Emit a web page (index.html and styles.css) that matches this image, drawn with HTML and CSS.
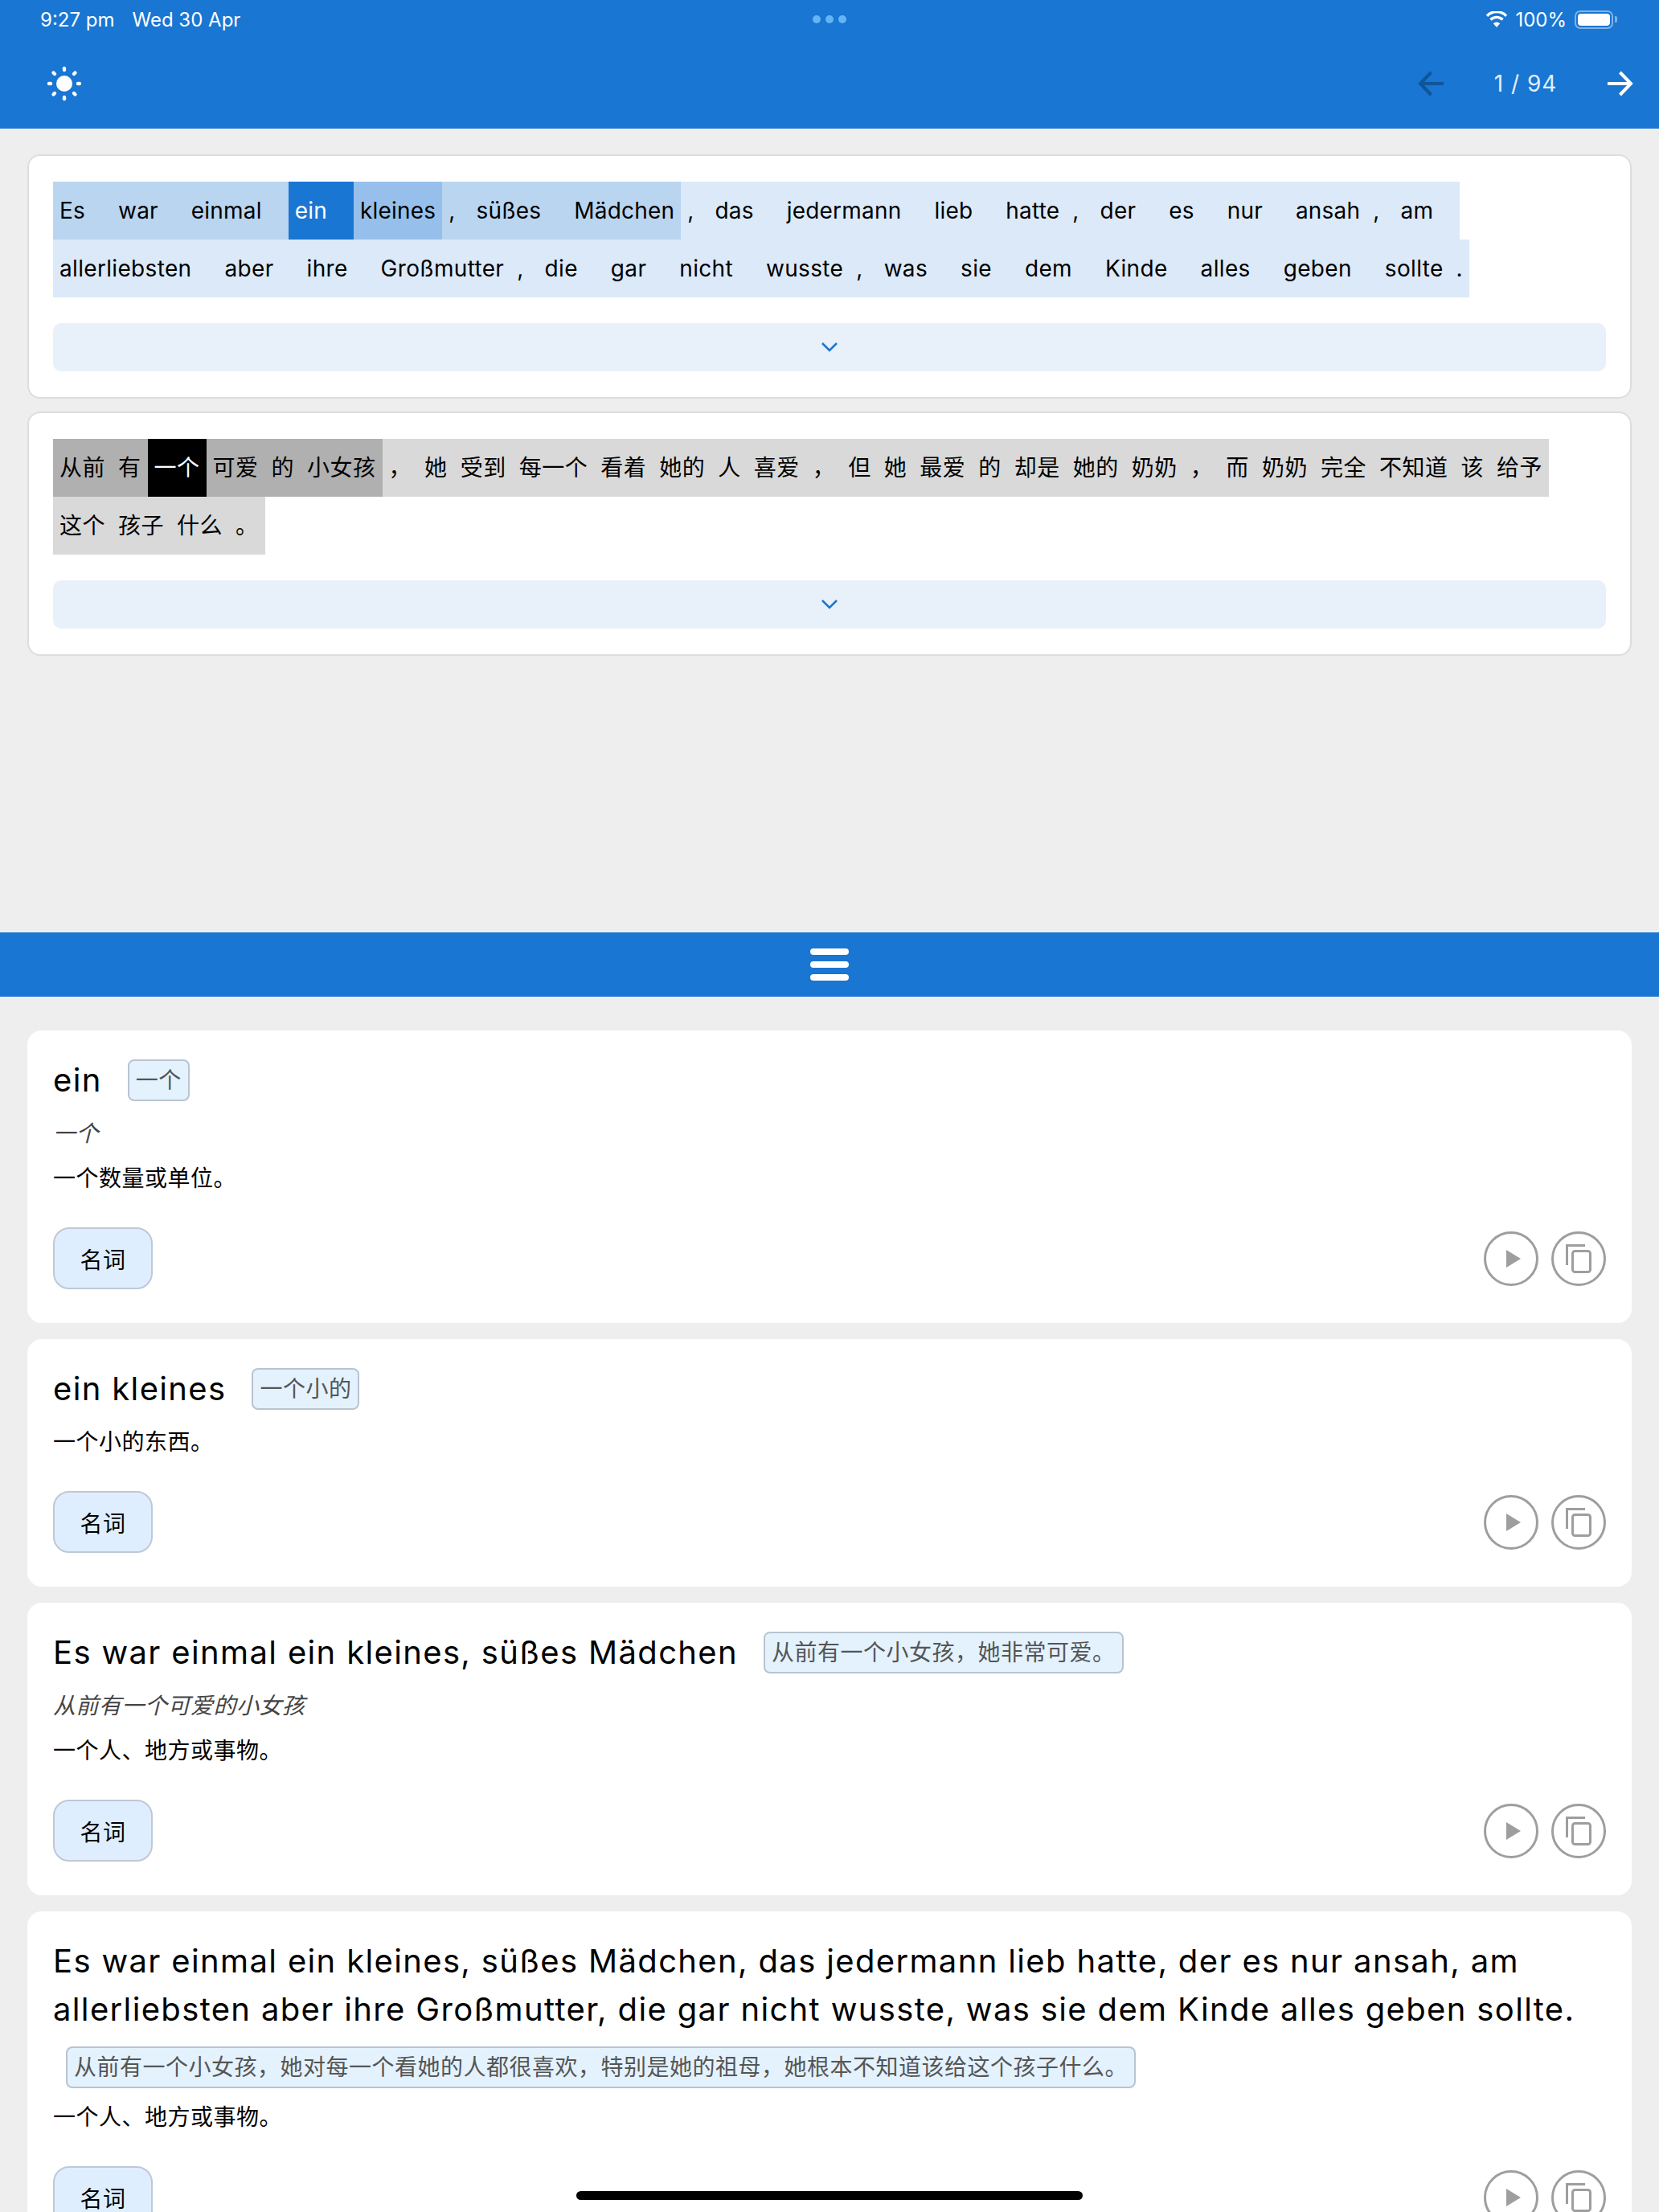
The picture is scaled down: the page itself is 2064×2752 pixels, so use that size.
FILE: index.html
```html
<!DOCTYPE html>
<html lang="zh">

<head>
  <meta charset="UTF-8">
  <meta name="viewport" content="width=device-width, initial-scale=1.0">
  <title>Reader</title>
  <link rel="stylesheet" href="styles.css">
</head>

<body>
  <div class="screen">
    <header class="topbar">
      <div class="status">
        <div class="status-left"><span>9:27 pm</span><span>Wed 30 Apr</span></div>
        <div class="status-dots"><i></i><i></i><i></i></div>
        <div class="status-right">
          <svg class="wifi" width="28" height="20" viewBox="0 0 28 20">
            <path d="M14 20 9.800 15.300A6 6 0 0 1 18.200 15.300Z" fill="#fff"/>
            <path d="M6.500 10.500A10.500 10.500 0 0 1 21.500 10.500M2 5.800A16.500 16.500 0 0 1 26 5.800" fill="none" stroke="#fff" stroke-width="3.400"/>
          </svg>
          <span class="battery-pct">100%</span>
          <span class="battery"><span class="battery-fill"></span></span>
          <span class="battery-tip"></span>
        </div>
      </div>
      <div class="toolbar">
        <svg class="sun" width="48" height="48" viewBox="0 0 48 48">
          <circle cx="24" cy="24" r="10" fill="#fff"/>
          <g stroke="#fff" stroke-width="4.400" stroke-linecap="round">
            <path d="M24 5V7M24 41V43M5 24H7M41 24H43M10.500 10.500 12 12M36 36 37.500 37.500M10.500 37.500 12 36M36 12 37.500 10.500"/>
          </g>
        </svg>
        <div class="pager">
          <svg width="32" height="32" viewBox="0 0 32 32"><path d="M32 16H3M16.500 2 3 16 16.500 30" fill="none" stroke="#0f5599" stroke-width="4"/></svg>
          <span class="pager-count">1 / 94</span>
          <svg width="32" height="32" viewBox="0 0 32 32"><path d="M0 16H29M15.500 2 29 16 15.500 30" fill="none" stroke="#fff" stroke-width="4"/></svg>
        </div>
      </div>
    </header>

    <section class="reader">
      <div class="text-card">
        <div class="tokens">
          <span class="line near"><b class="sp">Es</b><b class="sp">war</b><b class="sp">einmal</b></span><span class="line active"><b class="sp">ein</b></span><span class="line close"><b>kleines</b></span><span class="line near"><b class="cm">,</b><b class="sp">süßes</b><b>Mädchen</b></span><span class="line"><b class="cm">,</b><b class="sp">das</b><b class="sp">jedermann</b><b class="sp">lieb</b><b>hatte</b><b class="cm">,</b><b class="sp">der</b><b class="sp">es</b><b class="sp">nur</b><b>ansah</b><b class="cm">,</b><b class="sp">am</b></span><span class="line wide"><b class="sp">allerliebsten</b><b class="sp">aber</b><b class="sp">ihre</b><b>Großmutter</b><b class="cm">,</b><b class="sp">die</b><b class="sp">gar</b><b class="sp">nicht</b><b>wusste</b><b class="cm">,</b><b class="sp">was</b><b class="sp">sie</b><b class="sp">dem</b><b class="sp">Kinde</b><b class="sp">alles</b><b class="sp">geben</b><b>sollte</b><b>.</b></span>
        </div>
        <div class="expand">
          <svg width="22" height="14" viewBox="0 0 22 14"><path d="M2 2 11 11 20 2" fill="none" stroke="#1976d2" stroke-width="2.500"/></svg>
        </div>
      </div>

      <div class="text-card">
        <div class="tokens zh">
          <span class="line g-near"><b>从前</b><b>有</b></span><span class="line g-active"><b>一个</b></span><span class="line g-near"><b>可爱</b><b>的</b><b>小女孩</b></span><span class="line g-far"><b class="zh-cm">，</b><b>她</b><b>受到</b><b>每一个</b><b>看着</b><b>她的</b><b>人</b><b>喜爱</b><b class="zh-cm">，</b><b>但</b><b>她</b><b>最爱</b><b>的</b><b>却是</b><b>她的</b><b>奶奶</b><b class="zh-cm">，</b><b>而</b><b>奶奶</b><b>完全</b><b>不知道</b><b>该</b><b>给予</b></span><span class="line g-far"><b>这个</b><b>孩子</b><b>什么</b><b>。</b></span>
        </div>
        <div class="expand">
          <svg width="22" height="14" viewBox="0 0 22 14"><path d="M2 2 11 11 20 2" fill="none" stroke="#1976d2" stroke-width="2.500"/></svg>
        </div>
      </div>
    </section>

    <div class="divider">
      <div class="burger"><i></i><i></i><i></i></div>
    </div>

    <section class="entries">
      <article class="entry">
        <div class="entry-head"><span class="term">ein</span><span class="gloss">一个</span></div>
        <p class="literal">一个</p>
        <p class="meaning">一个数量或单位。</p>
        <div class="entry-foot">
          <span class="pos">名词</span>
          <div class="actions">
            <span class="round-btn"><svg class="play" width="18" height="22" viewBox="0 0 18 22"><path d="M0 0V22L18 11Z" fill="#9e9e9e"/></svg></span>
            <span class="round-btn"><svg width="32" height="36" viewBox="0 0 32 36"><path d="M1.500 26V1.500H24" fill="none" stroke="#9e9e9e" stroke-width="3"/><rect x="8.500" y="8.500" width="22" height="26" rx="3" fill="none" stroke="#9e9e9e" stroke-width="3"/></svg></span>
          </div>
        </div>
      </article>

      <article class="entry">
        <div class="entry-head"><span class="term">ein kleines</span><span class="gloss">一个小的</span></div>
        <p class="meaning">一个小的东西。</p>
        <div class="entry-foot">
          <span class="pos">名词</span>
          <div class="actions">
            <span class="round-btn"><svg class="play" width="18" height="22" viewBox="0 0 18 22"><path d="M0 0V22L18 11Z" fill="#9e9e9e"/></svg></span>
            <span class="round-btn"><svg width="32" height="36" viewBox="0 0 32 36"><path d="M1.500 26V1.500H24" fill="none" stroke="#9e9e9e" stroke-width="3"/><rect x="8.500" y="8.500" width="22" height="26" rx="3" fill="none" stroke="#9e9e9e" stroke-width="3"/></svg></span>
          </div>
        </div>
      </article>

      <article class="entry">
        <div class="entry-head"><span class="term">Es war einmal ein kleines, süßes Mädchen</span><span class="gloss">从前有一个小女孩，她非常可爱。</span></div>
        <p class="literal">从前有一个可爱的小女孩</p>
        <p class="meaning">一个人、地方或事物。</p>
        <div class="entry-foot">
          <span class="pos">名词</span>
          <div class="actions">
            <span class="round-btn"><svg class="play" width="18" height="22" viewBox="0 0 18 22"><path d="M0 0V22L18 11Z" fill="#9e9e9e"/></svg></span>
            <span class="round-btn"><svg width="32" height="36" viewBox="0 0 32 36"><path d="M1.500 26V1.500H24" fill="none" stroke="#9e9e9e" stroke-width="3"/><rect x="8.500" y="8.500" width="22" height="26" rx="3" fill="none" stroke="#9e9e9e" stroke-width="3"/></svg></span>
          </div>
        </div>
      </article>

      <article class="entry">
        <div class="entry-head long"><span class="term">Es war einmal ein kleines, süßes Mädchen, das jedermann lieb hatte, der es nur ansah, am allerliebsten aber ihre Großmutter, die gar nicht wusste, was sie dem Kinde alles geben sollte.</span><span class="gloss">从前有一个小女孩，她对每一个看她的人都很喜欢，特别是她的祖母，她根本不知道该给这个孩子什么。</span></div>
        <p class="meaning">一个人、地方或事物。</p>
        <div class="entry-foot">
          <span class="pos">名词</span>
          <div class="actions">
            <span class="round-btn"><svg class="play" width="18" height="22" viewBox="0 0 18 22"><path d="M0 0V22L18 11Z" fill="#9e9e9e"/></svg></span>
            <span class="round-btn"><svg width="32" height="36" viewBox="0 0 32 36"><path d="M1.500 26V1.500H24" fill="none" stroke="#9e9e9e" stroke-width="3"/><rect x="8.500" y="8.500" width="22" height="26" rx="3" fill="none" stroke="#9e9e9e" stroke-width="3"/></svg></span>
          </div>
        </div>
      </article>
    </section>

    <div class="home-bar"></div>
  </div>
</body>
</html>
```

FILE: styles.css
```css
* {
  box-sizing: border-box;
}

body {
  margin: 0;
  font-family: Inter, "Noto Sans CJK SC", sans-serif;
  background-color: #eeeeee;
  color: #000;
  letter-spacing: 0.5px;
}

.screen {
  position: relative;
  width: 2064px;
  height: 2752px;
  overflow: hidden;
  background-color: #eeeeee;
}

/* top bar */
.topbar {
  height: 160px;
  background-color: #1976d2;
  color: #fff;
}

.status {
  height: 48px;
  padding: 0 52px 0 50px;
  display: flex;
  align-items: center;
  justify-content: space-between;
  font-size: 24px;
  letter-spacing: 0;
  position: relative;
}

.status-left {
  display: flex;
  gap: 22px;
}

.status-dots {
  position: absolute;
  left: 1011px;
  top: 19px;
  display: flex;
  gap: 6px;
}

.status-dots i {
  width: 10px;
  height: 10px;
  border-radius: 50%;
  background-color: #64b5f6;
}

.status-right {
  display: flex;
  align-items: center;
}

.battery-pct {
  margin: 0 10px 0 9px;
}

.battery {
  width: 48px;
  height: 23px;
  border: 2px solid #7fb2e6;
  border-radius: 7px;
  padding: 2px;
}

.battery-fill {
  display: block;
  height: 100%;
  background-color: #fff;
  border-radius: 4px;
}

.battery-tip {
  width: 3px;
  height: 8px;
  background-color: #7fb2e6;
  border-radius: 0 2px 2px 0;
  margin-left: 2px;
}

.toolbar {
  height: 112px;
  padding: 0 32px 0 56px;
  display: flex;
  align-items: center;
  justify-content: space-between;
}

.pager {
  display: flex;
  align-items: center;
}

.pager-count {
  width: 204px;
  text-align: center;
  font-size: 28px;
  letter-spacing: 1px;
  color: #e3eefa;
}

/* reader cards */
.reader {
  height: 1000px;
  padding: 32px 34px 0;
}

.text-card {
  background-color: #fff;
  border: 2px solid #dddddd;
  border-radius: 16px;
  padding: 32px 30px;
  margin-bottom: 16px;
}

.tokens {
  font-size: 28px;
  line-height: 72px;
  letter-spacing: 0.2px;
}

.tokens.zh {
  letter-spacing: 0.5px;
}

.tokens b {
  font-weight: normal;
  display: inline-block;
  vertical-align: top;
  padding: 0 8px;
  background-color: inherit;
}

.tokens b.sp {
  padding-right: 33px;
}

.tokens b.cm {
  padding-right: 18px;
}

.line {
  background-color: #dce9f8;
}

.line.wide {
  letter-spacing: 0.33px;
}

.line.near {
  background-color: #bad5f0;
}

.line.close {
  background-color: #96c0eb;
}

.line.active {
  background-color: #1976d2;
  color: #fff;
}

.line.g-far {
  background-color: #d9d9d9;
}

.line.g-near {
  background-color: #b0b0b0;
}

.line.g-active {
  background-color: #000;
  color: #fff;
}

.expand {
  height: 60px;
  margin-top: 32px;
  border-radius: 10px;
  background-color: #e8f0f9;
  display: flex;
  align-items: center;
  justify-content: center;
}

/* divider */
.divider {
  height: 80px;
  background-color: #1976d2;
  display: flex;
  align-items: center;
  justify-content: center;
}

.burger {
  display: flex;
  flex-direction: column;
  gap: 8px;
}

.burger i {
  display: block;
  width: 48px;
  height: 8px;
  border-radius: 4px;
  background-color: #fff;
}

/* entries */
.entries {
  padding: 42px 34px 0;
}

.entry {
  background-color: #fff;
  border-radius: 18px;
  padding: 32px 32px 42px;
  margin-bottom: 20px;
}

.entry-head {
  display: flex;
  align-items: center;
  gap: 32px;
  min-height: 60px;
}

.entry-head.long {
  display: block;
}

.term {
  font-size: 40px;
  line-height: 60px;
  letter-spacing: 1.35px;
}

.long .term {
  display: block;
}

.gloss {
  font-size: 28px;
  line-height: 48px;
  padding: 0 8px;
  color: #555;
  background-color: #e3f2fd;
  border: 2px solid #b8c4d0;
  border-radius: 8px;
}

.long .gloss {
  display: block;
  width: fit-content;
  margin: 16px 0 0 16px;
}

.literal {
  margin: 16px 0 0;
  font-size: 28px;
  line-height: 40px;
  font-style: italic;
  color: #444;
}

.meaning {
  margin: 16px 0 0;
  font-size: 28px;
  line-height: 40px;
}

.entry-foot {
  margin-top: 41px;
  display: flex;
  align-items: center;
  justify-content: space-between;
}

.pos {
  width: 124px;
  height: 77px;
  display: flex;
  align-items: center;
  justify-content: center;
  font-size: 28px;
  background-color: #deeeff;
  border: 2px solid #c0c8d4;
  border-radius: 20px;
}

.actions {
  display: flex;
  gap: 16px;
}

.round-btn {
  width: 68px;
  height: 68px;
  border: 3px solid #9e9e9e;
  border-radius: 50%;
  display: flex;
  align-items: center;
  justify-content: center;
}

.play {
  margin-left: 5px;
}

.home-bar {
  position: absolute;
  left: 717px;
  top: 2726px;
  width: 630px;
  height: 11px;
  border-radius: 6px;
  background-color: #000;
}
```
